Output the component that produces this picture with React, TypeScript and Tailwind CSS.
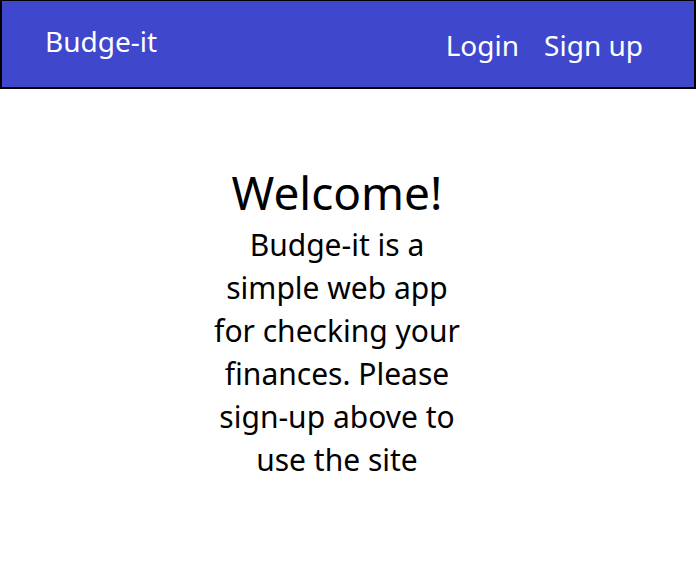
import React from 'react';

const NavLink = ({ label }: { label: string }) => (
    <a href="#" className="text-white text-[28px] leading-none">
        {label}
    </a>
);

function App() {
    return (
        <div className="min-h-screen bg-white font-['Noto_Sans',sans-serif]">
            <header className="h-[89px] bg-[#3f48cc] border-2 border-black border-t-[1px] flex items-center justify-between pl-[43px] pr-[51px]">
                <h1 className="text-white text-[28px] leading-none -mt-[7px]">Budge-it</h1>
                <nav className="flex gap-[25px] mt-[2px]">
                    <NavLink label="Login" />
                    <NavLink label="Sign up" />
                </nav>
            </header>
            <main className="flex justify-center pt-[74px] pr-[22px]">
                <div className="w-[256px] text-center text-black">
                    <h2 className="text-[46px] leading-[58px]">Welcome!</h2>
                    <p className="text-[30px] leading-[43px] mt-[2px]">
                        Budge-it is a simple web app for checking your finances. Please sign-up above to use the site
                    </p>
                </div>
            </main>
        </div>
    );
}

export default App;
